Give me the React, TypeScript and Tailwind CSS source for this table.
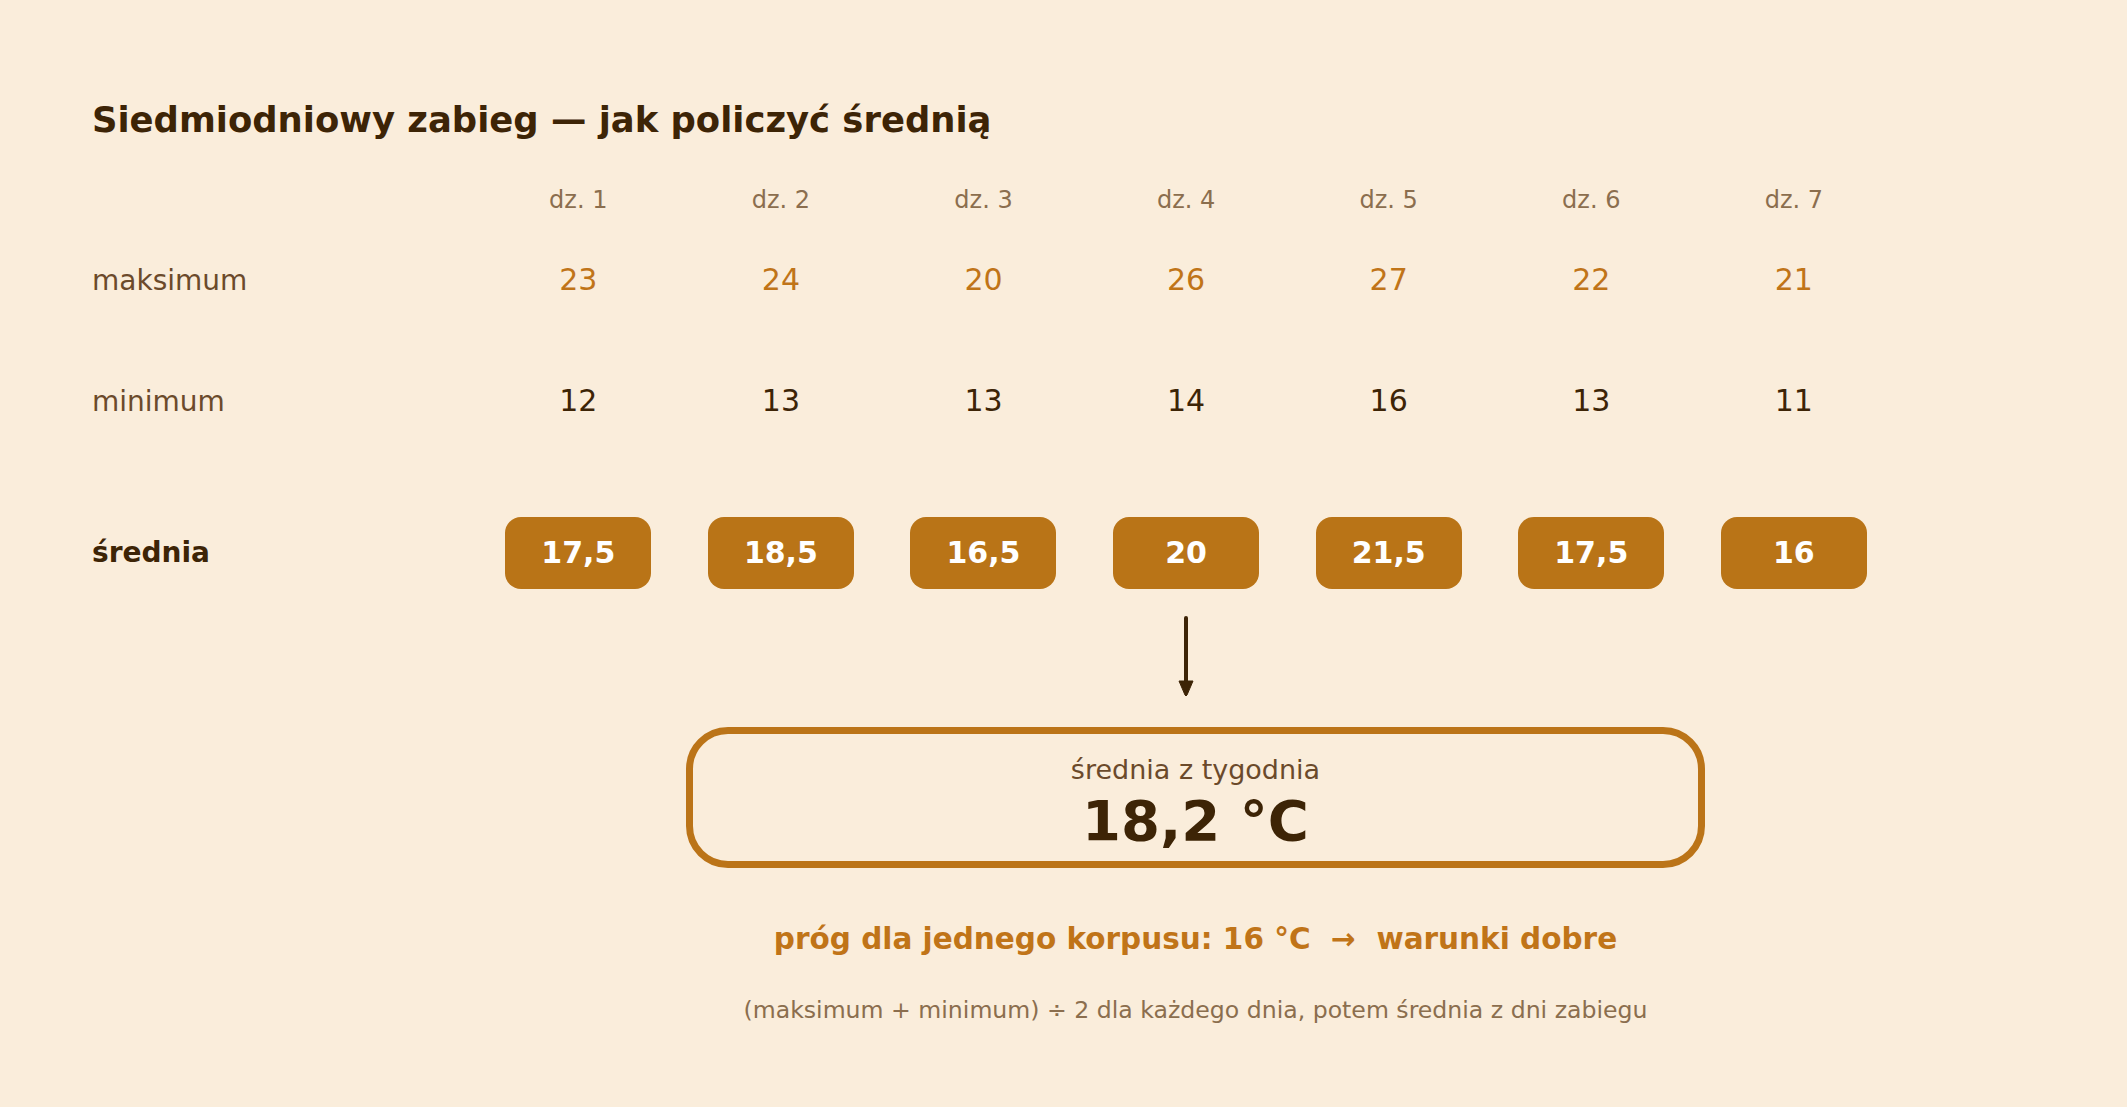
const days = [
  { max: 23, min: 12, avg: "17,5" },
  { max: 24, min: 13, avg: "18,5" },
  { max: 20, min: 13, avg: "16,5" },
  { max: 26, min: 14, avg: "20" },
  { max: 27, min: 16, avg: "21,5" },
  { max: 22, min: 13, avg: "17,5" },
  { max: 21, min: 11, avg: "16" },
];

const ArrowDown = () => (
  <svg width="20" height="80" viewBox="0 0 20 80">
    <line x1="10" y1="2" x2="10" y2="68" stroke="#3d2406" strokeWidth="4" strokeLinecap="round" />
    <path d="M3 65 L17 65 L11 79 Q10 81 9 79 Z" fill="#3d2406" stroke="#3d2406" strokeWidth="1" strokeLinejoin="round" />
  </svg>
);

const App = () => {
  return (
    <div
      className="min-h-screen w-full bg-[#faeddb] pl-[92px] pt-[102px]"
      style={{ fontFamily: '"DejaVu Sans", sans-serif' }}
    >
      <h1 className="text-[35.4px] font-bold leading-none text-[#3d2406]">
        Siedmiodniowy zabieg — jak policzyć średnią
      </h1>

      {/* header */}
      <div className="mt-[51px] flex">
        <div className="w-[385px] shrink-0" />
        {days.map((_, i) => (
          <div key={i} className="w-[202.6px] shrink-0 text-center text-[24px] leading-none text-[#8b6e4e]">
            dz. {i + 1}
          </div>
        ))}
      </div>

      {/* maksimum */}
      <div className="mt-[53px] flex items-baseline">
        <div className="w-[385px] shrink-0 text-[28px] leading-none text-[#6b4a2b]">maksimum</div>
        {days.map((d, i) => (
          <div key={i} className="w-[202.6px] shrink-0 text-center text-[30px] leading-none text-[#c07418]">
            {d.max}
          </div>
        ))}
      </div>

      {/* minimum */}
      <div className="mt-[91px] flex items-baseline">
        <div className="w-[385px] shrink-0 text-[28px] leading-none text-[#6b4a2b]">minimum</div>
        {days.map((d, i) => (
          <div key={i} className="w-[202.6px] shrink-0 text-center text-[30px] leading-none text-[#3d2406]">
            {d.min}
          </div>
        ))}
      </div>

      {/* średnia */}
      <div className="mt-[101px] flex items-center">
        <div className="w-[385px] shrink-0 text-[28px] font-bold leading-none text-[#3d2406]">średnia</div>
        {days.map((d, i) => (
          <div key={i} className="flex w-[202.6px] shrink-0 justify-center">
            <div className="flex h-[72px] w-[146px] items-center justify-center rounded-[16px] bg-[#b97417] text-[30px] font-bold leading-none text-white">
              {d.avg}
            </div>
          </div>
        ))}
      </div>

      {/* arrow under day 4 */}
      <div className="mt-[27px] flex">
        <div className="w-[385px] shrink-0" />
        <div className="w-[607.8px] shrink-0" />
        <div className="flex w-[202.6px] shrink-0 justify-center">
          <ArrowDown />
        </div>
      </div>

      {/* result */}
      <div className="ml-[594px] mt-[31px] flex w-[1019px] flex-col items-center">
        <div className="flex h-[141px] w-full flex-col items-center rounded-[42px] border-[7px] border-[#bb7418] pt-[22px]">
          <div className="text-[27px] leading-none text-[#6b4a2b]">średnia z tygodnia</div>
          <div className="mt-[10px] text-[56px] font-bold leading-none text-[#3d2406]">18,2 °C</div>
        </div>
        <div className="mt-[57px] whitespace-pre text-[29.5px] font-bold leading-none text-[#c07418]">
          próg dla jednego korpusu: 16 °C  →  warunki dobre
        </div>
        <div className="mt-[44px] text-[23.6px] leading-none text-[#8b6e4e]">
          (maksimum + minimum) ÷ 2 dla każdego dnia, potem średnia z dni zabiegu
        </div>
      </div>
    </div>
  );
};

export default App;
